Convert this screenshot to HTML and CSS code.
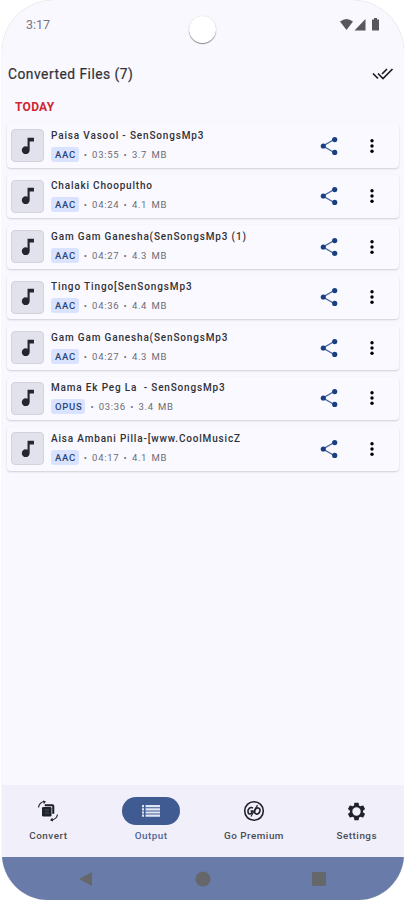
FILE: index.html
```
<!DOCTYPE html>
<html lang="en">
<head>
    <meta charset="UTF-8">
    <meta name="viewport" content="width=device-width, initial-scale=1.0">
    <title>Converted Files</title>
    <link rel="stylesheet" href="styles.css">
</head>
<body>
    <svg class="defs" width="0" height="0">
        <symbol id="note" viewBox="0 0 24 24"><path d="M11.500 3v9.800c-.59-.34-1.270-.55-2-.55-2.400 0-4.300 1.900-4.300 4.300s1.900 4.300 4.300 4.300 4.300-1.900 4.300-4.300V7h4.700V3z"/></symbol>
        <symbol id="share" viewBox="0 0 18 20"><path d="M15 3L3 10l12 7" fill="none" stroke="#48659c" stroke-width="1.400"/><circle cx="14.700" cy="3.600" r="2.600"/><circle cx="3.300" cy="10" r="2.600"/><circle cx="14.700" cy="16.400" r="2.600"/></symbol>
        <symbol id="more" viewBox="0 0 6 18"><circle cx="3" cy="3.700" r="1.700"/><circle cx="3" cy="9" r="1.700"/><circle cx="3" cy="14.300" r="1.700"/></symbol>
    </svg>

    <div class="phone">
        <div class="status">
            <span class="time">3:17</span>
            <svg class="signals" width="40" height="14" viewBox="0 0 40 14">
                <path d="M0 3.500Q6.500-1.500 13 3.500L6.500 12z"/>
                <path d="M14.500 12.500L25.500 1v11.500z"/>
                <path d="M32 1.500h2V0h3v1.500h2v11h-7z"/>
            </svg>
            <span class="camera"></span>
        </div>

        <div class="header">
            <h1>Converted Files (7)</h1>
            <svg width="22" height="14" viewBox="0 0 22 14" fill="none" stroke="#1c1d21" stroke-width="1.700"><path d="M1 6.500l5 5M6 6.500l5 5L20.500 2M10 7l5-5"/></svg>
        </div>
        <h2>TODAY</h2>

        <div class="list" id="list"></div>

        <div class="tabs">
            <div class="tab">
                <span class="pill"><svg width="22" height="22" viewBox="0 0 22 22" fill="#20222a"><path d="M8 4.500h7.500q1.500 0 1.500 1.500v7.500h-1.500V6H8z" stroke="#20222a" stroke-width=".6"/><rect x="5" y="7" width="9.500" height="9.500" rx="1.300"/><path d="M8 10h4M8 13h4" stroke="#4d5058"/><path d="M1.500 7.500C2 4 4 2 7.500 1.500M6 1l2 .7-1.300 1.800M20.500 14.500c-.5 3-2.500 5-6 5.500M16 21l-2-1 1.500-1.700" fill="none" stroke="#20222a" stroke-width="1.200"/></svg></span>
                <span>Convert</span>
            </div>
            <div class="tab active">
                <span class="pill"><svg width="18" height="12" viewBox="0 0 18 12" fill="#dfe5f5"><path d="M0 0h2v2.200H0zM3.500 0H18v2.200H3.500zM0 3.200h2v2.200H0zM3.500 3.200H18v2.200H3.500zM0 6.400h2v2.200H0zM3.500 6.400H18v2.200H3.500zM0 9.600h2v2.200H0zM3.500 9.600H18v2.200H3.500z"/></svg></span>
                <span>Output</span>
            </div>
            <div class="tab">
                <span class="pill"><svg width="22" height="22" viewBox="0 0 22 22" fill="none" stroke="#20222a" stroke-width="1.600"><circle cx="11" cy="11" r="9.300"/><path d="M10 8C7 6.500 4.500 9 5 12c.5 3 3.500 2.500 4.500-1H7.500"/><ellipse cx="14.300" cy="11" rx="2.500" ry="3.200" transform="rotate(20 14.300 11)"/><path d="M8 16.500L14.500 5" stroke-width="1.200"/></svg></span>
                <span>Go Premium</span>
            </div>
            <div class="tab">
                <span class="pill"><svg width="21" height="21" viewBox="0 0 24 24" fill="#20222a"><path fill-rule="evenodd" d="M19.430 12.980c.04-.32.07-.64.07-.98s-.03-.66-.07-.98l2.110-1.650c.19-.15.24-.42.12-.64l-2-3.460c-.12-.22-.39-.3-.61-.22l-2.490 1c-.52-.4-1.080-.73-1.690-.98l-.38-2.650A.49.49 0 0 0 14 2h-4c-.25 0-.46.18-.49.42l-.38 2.650c-.61.25-1.170.59-1.690.98l-2.490-1c-.23-.09-.49 0-.61.22l-2 3.460c-.13.22-.07.49.12.64l2.110 1.650a8 8 0 0 0 0 1.960l-2.110 1.650c-.19.15-.24.42-.12.64l2 3.460c.12.22.39.3.61.22l2.490-1c.52.4 1.080.73 1.690.98l.38 2.650c.03.24.24.42.49.42h4c.25 0 .46-.18.49-.42l.38-2.650c.61-.25 1.170-.59 1.690-.98l2.490 1c.23.09.49 0 .61-.22l2-3.460c.12-.22.07-.49-.12-.64zM12 16.800a4.800 4.800 0 1 1 0-9.600 4.800 4.800 0 0 1 0 9.600z"/></svg></span>
                <span>Settings</span>
            </div>
        </div>

        <div class="sysnav">
            <svg width="14" height="16" viewBox="0 0 14 16"><path d="M0 8L13 1v14z"/></svg>
            <svg width="16" height="16" viewBox="0 0 16 16"><circle cx="8" cy="8" r="7.500"/></svg>
            <svg width="14" height="14" viewBox="0 0 14 14"><rect width="14" height="14" rx="1.500"/></svg>
        </div>
    </div>

    <script src="script.js"></script>
</body>
</html>
```
FILE: styles.css
```
body {
    margin: 0;
    background-color: #fff;
    font-family: Roboto, sans-serif;
    color: #303137;
}

.defs {
    display: block;
}

.phone {
    box-sizing: border-box;
    width: 402px;
    height: 900px;
    margin-left: 2px;
    display: flex;
    flex-direction: column;
    background-color: #f9f8ff;
    border-radius: 52px 52px 46px 46px;
    box-shadow: 0 0 1px #bbb;
    overflow: hidden;
}

.status {
    position: relative;
    box-sizing: border-box;
    height: 49px;
    padding: 16px 24px 0 24px;
    display: flex;
    justify-content: space-between;
}

.time {
    font-size: 12.5px;
    line-height: 17px;
    color: #77777d;
}

.signals {
    margin-top: 2px;
    fill: #58585c;
}

.camera {
    position: absolute;
    left: 187px;
    top: 16px;
    width: 27px;
    height: 27px;
    border-radius: 50%;
    background-color: #fff;
    box-shadow: 0 1px 1px #888, 0 0 1px #ccc;
}

.header {
    height: 49px;
    padding: 0 10px 0 6px;
    display: flex;
    justify-content: space-between;
    align-items: center;
}

h1 {
    margin: 0;
    font-size: 13.8px;
    font-weight: 400;
    letter-spacing: 0.5px;
    -webkit-text-stroke: 0.2px;
}

h2 {
    margin: 0 0 0 13px;
    height: 26px;
    font-size: 12px;
    line-height: 19px;
    font-weight: 700;
    letter-spacing: 0.3px;
    color: #cf2630;
}

.list {
    flex: 1;
    padding: 0 5px 0 5px;
}

.card {
    box-sizing: border-box;
    height: 43.5px;
    margin-bottom: 7px;
    padding: 0 24.5px 0 4px;
    display: flex;
    align-items: center;
    border-radius: 4px;
    background-color: #faf9ff;
    box-shadow: 0 1px 2px #cfced8;
}

.art {
    box-sizing: border-box;
    width: 33px;
    height: 33px;
    margin-right: 7px;
    display: flex;
    align-items: center;
    justify-content: center;
    border: 1px solid #d1d2dc;
    border-radius: 4px;
    background-color: #e1e2eb;
}

.info {
    flex: 1;
}

.name {
    height: 17px;
    font-size: 10px;
    line-height: 12px;
    font-weight: 500;
    white-space: pre;
}

.meta {
    display: flex;
    align-items: center;
    height: 15px;
    font-size: 9.5px;
    letter-spacing: 0.7px;
    word-spacing: 1.3px;
    color: #6b6c73;
    white-space: pre;
}

.format {
    padding: 0 3px 0 4px;
    margin-right: 5px;
    line-height: 15px;
    font-weight: 500;
    border-radius: 3px;
    background-color: #d9e2ff;
    color: #294677;
}

.share {
    fill: #173f82;
    margin-right: 30.5px;
}

.tabs {
    height: 72px;
    margin-left: -5px;
    display: flex;
    background-color: #f1effa;
}

.tab {
    width: 102.8px;
    padding-top: 12px;
    display: flex;
    flex-direction: column;
    align-items: center;
    flex-shrink: 0;
    font-size: 9.9px;
    line-height: 12px;
    font-weight: 500;
    letter-spacing: 0.5px;
    color: #4a4c54;
}

.pill {
    width: 58px;
    height: 28px;
    margin-bottom: 5px;
    display: flex;
    align-items: center;
    justify-content: center;
    border-radius: 14px;
}

.active {
    color: #4d6597;
}

.active .pill {
    background-color: #405b91;
}

.sysnav {
    box-sizing: border-box;
    height: 43px;
    padding: 0 78px 0 77px;
    display: flex;
    align-items: center;
    justify-content: space-between;
    background-color: #687ba9;
    fill: #66676b;
}
```
FILE: script.js
```
// last value is the letter spacing of the title
const files = [
    ["Paisa Vasool - SenSongsMp3", "AAC", "03:55", "3.7 MB", 0.84],
    ["Chalaki Choopultho", "AAC", "04:24", "4.1 MB", 0.8],
    ["Gam Gam Ganesha(SenSongsMp3 (1)", "AAC", "04:27", "4.3 MB", 0.84],
    ["Tingo Tingo[SenSongsMp3", "AAC", "04:36", "4.4 MB", 0.88],
    ["Gam Gam Ganesha(SenSongsMp3", "AAC", "04:27", "4.3 MB", 0.84],
    ["Mama Ek Peg La  - SenSongsMp3", "OPUS", "03:36", "3.4 MB", 0.82],
    ["Aisa Ambani Pilla-[www.CoolMusicZ", "AAC", "04:17", "4.1 MB", 0.82]
];

document.getElementById("list").innerHTML = files.map(([name, format, time, size, spacing]) => `
    <div class="card">
        <div class="art"><svg width="22" height="22" fill="#25262d"><use href="#note"/></svg></div>
        <div class="info">
            <div class="name" style="letter-spacing: ${spacing}px">${name}</div>
            <div class="meta"><span class="format">${format}</span><span>• ${time} • ${size}</span></div>
        </div>
        <svg class="share" width="18" height="20"><use href="#share"/></svg>
        <svg width="6" height="18"><use href="#more"/></svg>
    </div>`).join("");
```
